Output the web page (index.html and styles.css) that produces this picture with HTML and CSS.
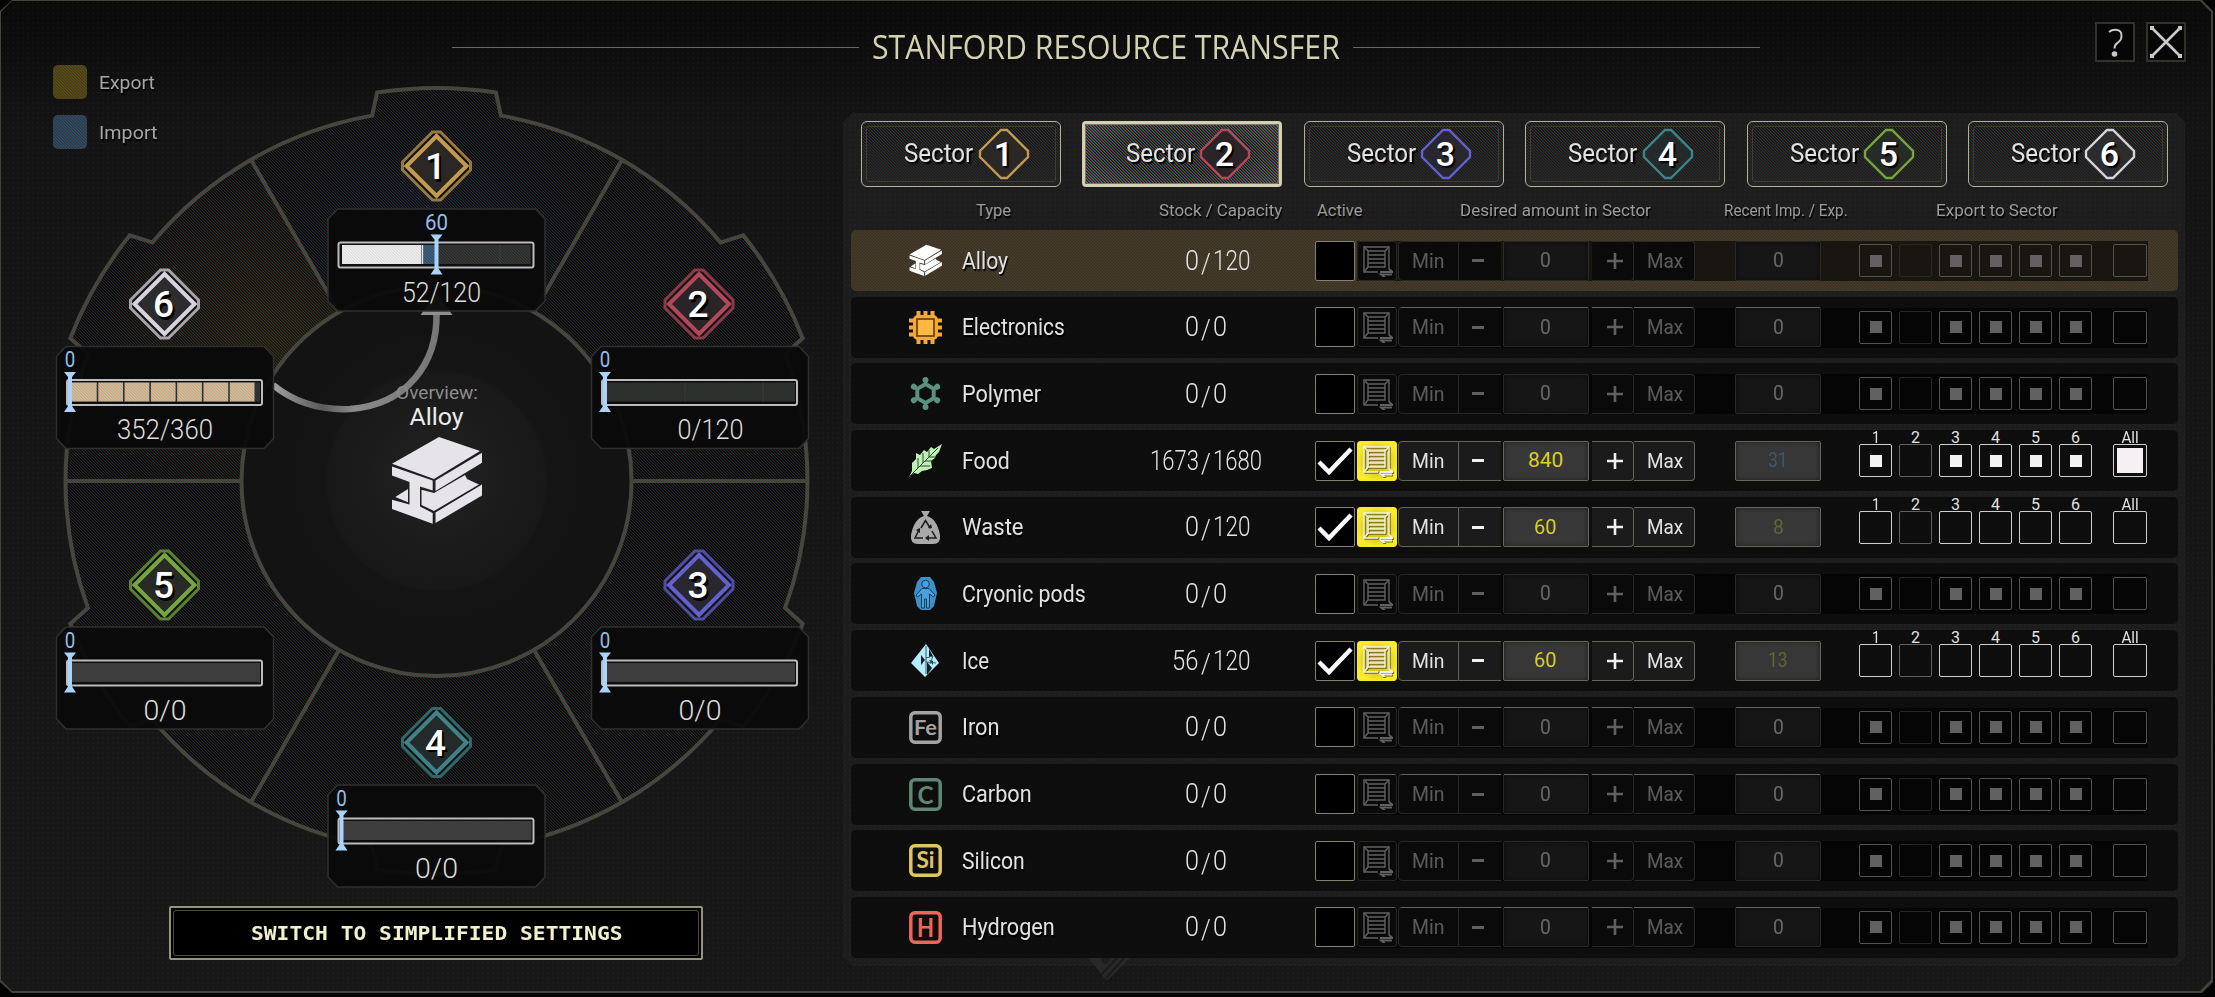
FILE: index.html
```html
<!DOCTYPE html>
<html lang="en">
<head>
<meta charset="utf-8">
<title>Stanford Resource Transfer</title>
<link rel="stylesheet" href="styles.css">
</head>
<body>
<main class="window">
  <div class="window-face"></div>
  <svg class="emblem" width="44" height="24" viewBox="0 0 44 24"><path d="M0 0h12l5 7 7-7h18L21 21q-2 2-4 0l-6-8z"/><path class="gap" d="M29 0 14 16M36 0 18 20"/></svg>
  <header class="titlebar">
    <i class="rule rule-left"></i>
    <h1><span class="fit" data-w="468">STANFORD RESOURCE TRANSFER</span></h1>
    <i class="rule"></i>
    <div class="tools">
      <button class="tool"><svg width="40" height="40" viewBox="0 0 40 40"><path class="thin" d="M14 10q3-2.500 7-2.200 6 .5 5.500 6.500 0 4-4 6.500-3 2-3 5.700"/><circle cx="19.500" cy="32" r="2.800"/></svg></button>
      <button class="tool"><svg width="40" height="40" viewBox="0 0 40 40"><path d="M5 5 35 35M35 5 5 35"/><path class="ends" d="M4 4h4v4h-4zM32 4h4v4h-4zM4 32h4v4h-4zM32 32h4v4h-4z"/></svg></button>
    </div>
  </header>
  <section class="content">
    <div class="overview">
      <ul class="legend">
        <li><i class="swatch export"></i><span class="fit" data-w="56">Export</span></li>
        <li><i class="swatch import"></i><span class="fit" data-w="58">Import</span></li>
      </ul>
      <svg class="wheel" id="wheel" width="840" height="900" viewBox="0 0 840 900"></svg>
      <button class="switch"><span class="fit" data-w="371">SWITCH TO SIMPLIFIED SETTINGS</span></button>
    </div>
    <div class="panel">
      <nav class="tabs" id="tabs"></nav>
      <div class="heads">
        <span class="fit" data-w="35">Type</span>
        <span class="fit" data-w="123">Stock / Capacity</span>
        <span class="fit" data-w="45">Active</span>
        <span class="fit" data-w="191">Desired amount in Sector</span>
        <span class="fit" data-w="124">Recent Imp. / Exp.</span>
        <span class="fit" data-w="122">Export to Sector</span>
      </div>
      <div class="rows" id="rows"></div>
    </div>
  </section>
</main>
<script src="script.js"></script>
</body>
</html>
```
FILE: styles.css
```css
:root { --hatch: url("data:image/svg+xml,%3Csvg xmlns='http://www.w3.org/2000/svg' width='3' height='3' shape-rendering='crispEdges' fill-opacity='.28'%3E%3Cpath fill='%23f00' d='M0 0h1v1H0zM1 1h1v1H1zM2 2h1v1H2z'/%3E%3Cpath fill='%230f0' d='M1 0h1v1H1zM2 1h1v1H2zM0 2h1v1H0z'/%3E%3Cpath fill='%2300f' d='M2 0h1v1H2zM0 1h1v1H0zM1 2h1v1H1z'/%3E%3C/svg%3E"); }
* { box-sizing: border-box; }
body { margin: 0; background: #030303; font-family: Roboto, "Liberation Sans", sans-serif; color: #e2e2e2; }
h1, ul { margin: 0; padding: 0; }
button { padding: 0; margin: 0; border: 0; background: none; color: inherit; font: inherit; }
i { display: block; }
.fit { display: inline-block; white-space: nowrap; line-height: 1; text-align: left; }
.fit b { display: inline-block; font-weight: inherit; transform-origin: 0 50%; }

.window { position: relative; width: 2213px; height: 993px; background: #45443b;
  clip-path: polygon(12px 0, 2202px 0, 2213px 11px, 2213px 982px, 2202px 993px, 12px 993px, 0 982px, 0 11px); }
.window-face { position: absolute; inset: 1px 2px 2px 1px;
  clip-path: polygon(11px 0, calc(100% - 11px) 0, 100% 11px, 100% calc(100% - 11px), calc(100% - 11px) 100%, 11px 100%, 0 calc(100% - 11px), 0 11px);
  background: radial-gradient(circle at 2px 2px, rgba(255,255,255,.02) 1px, transparent 1.300px) 0 0 / 5px 5px,
    linear-gradient(#0a0a0a, #0c0c0c 30px, #141414 130px, #161616 60%, #171717); }
.emblem { position: absolute; left: 1088px; top: 958px; fill: #282828; z-index: 1; }
.emblem .gap { stroke: #1b1b1b; stroke-width: 2; }

.titlebar { position: relative; height: 113px; display: flex; align-items: flex-start; padding: 22px 27px 0 452px; }
.rule { width: 407px; height: 1px; background: #69685a; margin-top: 25px; }
h1 { font: 400 32px "Open Sans", "Noto Sans", sans-serif; color: #d5d2b4; margin: 9px 14px 0 13px; width: 467px; display: flex; }
.tools { margin-left: auto; display: flex; gap: 11px; }
.tool { width: 40px; height: 40px; background: #060606; outline: 2px solid #33322a; outline-offset: -2px; display: block; }
.tool svg { display: block; fill: #c9c9c9; stroke: none; }
.tool path { stroke: #c9c9c9; stroke-width: 2.600; fill: none; }
.tool path.thin { stroke-width: 2; }
.tool path.ends { fill: #c9c9c9; stroke: none; }

.content { position: relative; display: flex; height: 853px; }
.overview { width: 843px; position: relative; flex: none; }
.legend { position: absolute; left: 53px; top: -48px; list-style: none; display: grid; gap: 16px; font-size: 19px; color: #a6a6a6; z-index: 2; }
.legend li { display: flex; align-items: center; gap: 11.500px; height: 34px; text-shadow: 1px 2px 1px #000; }
.swatch { width: 34px; height: 34px; border-radius: 5px; }
.export { background: linear-gradient(rgba(76,62,16,.4), rgba(76,62,16,.4)), var(--hatch), #51430a; }
.import { background: linear-gradient(rgba(42,62,82,.4), rgba(42,62,82,.4)), var(--hatch), #264056; }
.wheel { position: absolute; left: 0; top: -113px; }
.switch { position: absolute; left: 169px; top: 793px; width: 534px; height: 54px; background: #000; border: 2px solid #96937a;
  display: grid; place-items: center; padding-top: 2px; font: 700 19.500px "DejaVu Sans Mono", monospace; color: #f3f0cb; border-radius: 2px; }
.switch::before { content: ""; position: absolute; inset: 2px; border: 1px solid #4e4c3e; border-radius: 3px; }

.panel { width: 1342px; height: 853px; padding: 8px 7px 0 8px;
  background: radial-gradient(circle at 2px 2px, rgba(255,255,255,.02) 1px, transparent 1.300px) 0 0 / 5px 5px, #1d1d1d;
  clip-path: polygon(9px 0, calc(100% - 9px) 0, 100% 9px, 100% calc(100% - 9px), calc(100% - 9px) 100%, 9px 100%, 0 calc(100% - 9px), 0 9px); }
.tabs { display: flex; justify-content: space-between; padding: 0 10px; }
.tab { position: relative; width: 200px; height: 66px; border: 1.500px solid #b5b298; border-radius: 6px; display: flex; align-items: center; padding-left: 42px; gap: 4px;
  font-size: 26px; text-shadow: 2px 2px 1px #000;
  background: linear-gradient(rgba(20,20,20,0) 20%, rgba(36,36,36,.8)), var(--hatch), #0e0e0e; }
.tab .fit { margin-top: -2px; }
.tab::before { content: ""; position: absolute; inset: 4px; border: 1px solid #3e3d34; border-radius: 3px; }
.tab.on { border: 3px solid #d3d0b3; border-radius: 4px; padding-left: 40.500px;
  background: var(--hatch), var(--hatch), radial-gradient(ellipse, #141414 50%, #3c3c3a); }
.tab.on::before { inset: 0; border-color: #7a7968; }
.tab svg { position: relative; display: block; flex: none; }
.heads { display: grid; grid-template-columns: 183px 158px 143px 263.500px 212.500px 1fr; padding: 5px 0 0 125px; height: 43px; align-items: center; font-size: 16.500px; color: #9b9b9b; text-shadow: 1px 2px 1px #000; }

.rows { display: grid; gap: 5.700px; }
.row { position: relative; height: 61px; border-radius: 5px; display: grid; align-items: center;
  grid-template-columns: 33px 19.500px 189px 164.500px 40px 2px 40px 1px 299px 38px 86px 38px auto; padding-left: 58px;
  background: linear-gradient(rgba(11,11,11,.88), rgba(11,11,11,.88)), var(--hatch), #0c0c0c; }
.row.picked { background: linear-gradient(rgba(62,52,34,.6), rgba(62,52,34,.6)), var(--hatch), #3a3220; }
.row svg { display: block; }
.name { grid-column: 3; font-size: 23.500px; text-shadow: 1px 2px 1px #000; }
.stock { display: flex; font-size: 27px; font-weight: 300; padding-top: 6px; }
.stock .used { width: 48px; display: flex; justify-content: flex-end; margin-right: 2px; }
.stock .slash { width: 12px; }
.check { grid-column: 5; width: 40px; height: 40px; background: #000; border: 1.500px solid #84826d; border-radius: 2px; }
.check svg { margin: -1px; }
.crate { grid-column: 7; width: 40px; height: 40px; border-radius: 3px; border: 1px solid #605f54; background: #1b1b1b; display: grid; place-items: center; }
.active .crate { background: radial-gradient(#d9c823 40%, #f9ea2b 75%); border-color: #f9ea2b; }
.crate svg { filter: drop-shadow(1px 1px 0 rgba(0,0,0,.5)); }
.stepper { grid-column: 9; display: flex; font-size: 20px; }
.cell { height: 40px; border: 1.500px solid #67655a; background: #1b1b1b; display: grid; place-items: center; }
.min { width: 61px; border-radius: 4px 0 0 4px; padding-right: 2px; }
.minus { width: 42px; border-right: 0; border-left: 0; padding-right: 4px; }
.value { width: 86px; margin: 0 3px 0 1.500px; background: #373737; box-shadow: inset 0 0 4px #1c1c1c; font-size: 21px; border-radius: 2px; color: #d9cf28; }
.plus { width: 42px; border-left: 0; border-radius: 0 4px 4px 0; padding-left: 5px; }
.max { width: 61px; border-left: 0; border-radius: 0 4px 4px 0; padding-left: 2px; }
.recent { grid-column: 11; margin: 0; color: #686335; }
.recent.in { color: #40566b; }
.idle .value { color: #fff; }
.targets { grid-column: 13; display: flex; gap: 7px; }
.box { position: relative; width: 33px; height: 33px; border: 1.500px solid #cfcfcf; border-radius: 2px; display: grid; place-items: center; }
.box.own { border-color: #626262; }
.box i { width: 12px; height: 12px; background: #f4f0f4; }
.box.all { margin-left: 14px; width: 34px; }
.box.all i { width: 26px; height: 25px; }
.tag { position: absolute; left: 50%; top: -15px; transform: translateX(-50%); font-size: 16px; line-height: 1; display: flex; }
.shade { position: absolute; left: 506px; right: 30px; top: 11px; height: 40px; background: rgba(0,0,0,.6); }
```
FILE: script.js
```js
const HUES = { 1: '#c39a4e', 2: '#b3475c', 3: '#6560cf', 4: '#3f8288', 5: '#76a63f', 6: '#d8d3dc' };
const FILLS = { 1: '#2a2724', 2: '#2b2426', 3: '#28272f', 4: '#242a2a', 5: '#272a25', 6: '#2c2c2e' };
const fit = (text, w) => `<span class="fit" data-w="${w}">${text}</span>`;

/* ---------- wheel ---------- */
const CX = 436.500, CY = 481;
const pt = (r, deg) => {
  const a = deg * Math.PI / 180;
  return `${(CX + r * Math.sin(a)).toFixed(1)} ${(CY - r * Math.cos(a)).toFixed(1)}`;
};
const label = (x, y, w, size, fill, text, extra = '') =>
  `<text x="${x - w / 2}" y="${y}" font-size="${size}" fill="${fill}" textLength="${w}" lengthAdjust="spacingAndGlyphs" ${extra}>${text}</text>`;

function rim() {
  let d = `M${pt(371, -50)}`;
  for (let i = 0; i < 6; i++) {
    const c = i * 60;
    d += `A371 371 0 0 1 ${pt(371, c - 10)}L${pt(393, c - 8.7)}A393 393 0 0 1 ${pt(393, c + 8.7)}L${pt(371, c + 10)}`;
  }
  return d + `A371 371 0 0 1 ${pt(371, -50)}Z`;
}
const wedge = c => `M${pt(195, c - 30)}L${pt(371, c - 30)}A371 371 0 0 1 ${pt(371, c + 30)}L${pt(195, c + 30)}A195 195 0 0 0 ${pt(195, c - 30)}Z`;

function badge(n, x, y) {
  return `<g transform="translate(${x} ${y})" fill="none" stroke="${HUES[n]}">
    <path d="M-4-34h8L34-4v8L4 34h-8L-34 4v-8Z" fill="#151515" stroke-width="3" stroke-opacity=".75"/>
    <path d="M0-30 30 0 0 30-30 0Z" fill="${FILLS[n]}" stroke-width="4"/></g>
    <text x="${x - 1}" y="${y + 13.500}" text-anchor="middle" font-size="37" font-weight="500" fill="#000" transform="translate(2 2)">${n}</text>
    <text x="${x - 1}" y="${y + 13}" text-anchor="middle" font-size="37" font-weight="500" fill="#fff">${n}</text>`;
}

function card(o) {
  const { x, y } = o;
  let bar;
  if (o.kind === 'partial') {
    bar = `<rect x="${x + 14.500}" y="${y + 36.500}" width="79" height="19" fill="#fff"/><rect x="${x + 94}" y="${y + 36.500}" width="2" height="19" fill="#fff"/>
      <rect x="${x + 96}" y="${y + 36.500}" width="12" height="19" fill="#33587d"/><rect x="${x + 108}" y="${y + 36.500}" width="95" height="19" fill="#292c2a"/>
      <rect x="${x + 172}" y="${y + 36.500}" width="1" height="19" fill="#3b3e3c"/>`;
  } else if (o.kind === 'full') {
    bar = `<rect x="${x + 15}" y="${y + 36.500}" width="189" height="19" fill="#292c2a"/>`;
    for (let i = 0; i < 7; i++) bar += `<rect x="${x + 16 + i * 26.300}" y="${y + 36.500}" width="24.700" height="19" fill="#e0c59c"/>`;
  } else if (o.kind === 'empty') {
    bar = `<rect x="${x + 15}" y="${y + 36.500}" width="189" height="19" fill="#292c2a"/><path d="M${x + 94} ${y + 36.500}v19M${x + 172} ${y + 36.500}v19" stroke="#363937"/>`;
  } else bar = `<rect x="${x + 15}" y="${y + 36.500}" width="189" height="19" fill="#3b3b3b"/>`;
  const m = x + o.mark;
  return `<path d="M${x + 10} ${y + .5}h198l9.500 10v82l-9.500 10h-198l-9.500-10v-82Z" fill="rgba(10,10,10,.94)" stroke="#2f2f2f" stroke-width="1.500"/>
    <rect x="${x + 11}" y="${y + 34}" width="195" height="25" rx="2" fill="#0c0c0c" stroke="#bdbbc0" stroke-width="2"/>${bar}
    <rect x="${x + 14}" y="${y + 36}" width="190" height="20" fill="url(#hatch)" opacity="${o.kind === 'partial' || o.kind === 'full' ? .6 : .3}"/>
    <path d="M${m - 6} ${y + 26}h12l-4 5v29l4 6h-12l4-6v-29Z" fill="#a9d3fb"/>
    ${label(m, y + 21, o.goal === '0' ? 10.500 : 23, 21.500, '#93bdea', o.goal)}
    ${label(x + o.cx, y + 93, o.w + 2, 27, '#dcdcdc', o.text, 'font-weight="300"')}`;
}

const beam = fill => `<path d="M0 26.700 47 0 88 14 42 42ZM0 29.500 40.700 43.500V53.500L28 49.500V69.500L40.700 76V86.700L0 72V62.700L17.500 67.500V45L0 38.500ZM43.500 43.500 90 15.700V25.700L43.500 54ZM29.500 52.700 42 56 73 38 75 42 87 47.500 42 74 29.500 68ZM43.500 75.500 90 47.500V58.500L43.500 86ZM3.300 60 16 52V65.300Z" fill="${fill}"/>`;

document.getElementById('wheel').innerHTML = `
  <defs>
    <pattern id="hatch" width="3" height="3" patternUnits="userSpaceOnUse" shape-rendering="crispEdges">
      ${[0, 1, 2].map(y => ['#f00', '#0f0', '#00f'].map((c, k) => `<rect x="${(k + y) % 3}" y="${y}" width="1" height="1" fill="${c}" opacity=".25"/>`).join('')).join('')}
    </pattern>
    <radialGradient id="glow"><stop offset="0" stop-color="#202020"/><stop offset=".4" stop-color="#1e1e1e" stop-opacity=".7"/><stop offset="1" stop-color="#1c1c1c" stop-opacity="0"/></radialGradient>
    <linearGradient id="flow"><stop offset="0" stop-color="#a0a0a0"/><stop offset=".3" stop-color="#5a5a5a"/><stop offset=".5" stop-color="#8a8a8a"/><stop offset="1" stop-color="#777"/></linearGradient>
    <radialGradient id="blue" gradientUnits="userSpaceOnUse" cx="436" cy="260" r="170"><stop offset="0" stop-color="#060a1a"/><stop offset="1" stop-color="#060a1a" stop-opacity="0"/></radialGradient>
    <radialGradient id="gold" gradientUnits="userSpaceOnUse" cx="270" cy="340" r="190"><stop offset="0" stop-color="#181402"/><stop offset="1" stop-color="#181402" stop-opacity="0"/></radialGradient>
  </defs>
  <path d="${rim()}" fill="#000"/>
  <path d="${wedge(0)}" fill="url(#blue)"/><path d="${wedge(-60)}" fill="url(#gold)"/>
  <path d="${rim()}" fill="url(#hatch)" stroke="#47463e" stroke-width="4"/>
  <circle cx="${CX}" cy="${CY}" r="195" fill="#131313" stroke="#47463e" stroke-width="4"/>
  <path d="${[30, 90, 150, 210, 270, 330].map(a => `M${pt(195, a)}L${pt(371, a)}`).join('')}" stroke="#47463e" stroke-width="4"/>
  <circle cx="${CX}" cy="${CY - 5}" r="140" fill="url(#glow)"/><circle cx="${CX}" cy="${CY}" r="110" fill="url(#hatch)" opacity=".15"/>
  <path d="M273 385Q305 411 350 409C405 405 438 365 436.500 312" fill="none" stroke="url(#flow)" stroke-width="6.500"/>
  <path d="M420.500 315h32l-16-22Z" fill="#8f8f8f"/>
  ${badge(1, 436.500, 166)}${badge(2, 699, 304)}${badge(3, 699, 585)}${badge(4, 436.500, 742.500)}${badge(5, 164.500, 585)}${badge(6, 164.500, 304)}
  ${card({ x: 327.500, y: 208.500, kind: 'partial', mark: 109, goal: '60', text: '52/120', w: 77, cx: 114 })}
  ${card({ x: 591, y: 346, kind: 'empty', mark: 14, goal: '0', text: '0/120', w: 64, cx: 119.500 })}
  ${card({ x: 56, y: 346, kind: 'full', mark: 14, goal: '0', text: '352/360', w: 94, cx: 109 })}
  ${card({ x: 591, y: 626.500, kind: 'none', mark: 14, goal: '0', text: '0/0', w: 41, cx: 109 })}
  ${card({ x: 56, y: 626.500, kind: 'none', mark: 14, goal: '0', text: '0/0', w: 41, cx: 109 })}
  ${card({ x: 327.500, y: 784.500, kind: 'none', mark: 14, goal: '0', text: '0/0', w: 41, cx: 109 })}
  ${label(437, 399, 82, 19, '#8c8c8c', 'Overview:')}
  ${label(436.500, 425, 54, 24, '#ececec', 'Alloy')}
  <g transform="translate(392 437)">${beam('#e6e4e8')}</g>`;

/* ---------- tabs ---------- */
document.getElementById('tabs').innerHTML = [1, 2, 3, 4, 5, 6].map(n => `
  <button class="tab${n === 2 ? ' on' : ''}">${fit('Sector', 69.500)}
    <svg width="52" height="52" viewBox="-26 -26 52 52"><path d="M-3-24h6L24-3v6L3 24h-6L-24 3v-6Z" fill="${FILLS[n]}" stroke="${HUES[n]}" stroke-width="2.400"/>
    <text x="-.5" y="11.500" text-anchor="middle" font-size="34" font-weight="500" fill="#fff">${n}</text></svg></button>`).join('');

/* ---------- rows ---------- */
const el = (c, t, w, s = 19) => `<rect x="1.800" y="1.800" width="29.400" height="29.400" rx="4" fill="none" stroke="${c}" stroke-width="3.500"/>
  <text x="${16.500 - w / 2}" y="${16.500 + s * .36}" font-family="Lato" font-weight="700" font-size="${s}" fill="${c}" textLength="${w}" lengthAdjust="spacingAndGlyphs">${t}</text>`;
const ICONS = {
  Alloy: `<g transform="translate(.5 .8) scale(.36)">${beam('#fff')}</g>`,
  Electronics: `<g fill="#f4a83a"><rect x="4" y="4" width="25" height="25" rx="5"/><path d="M7.500 0h4v33h-4zM14.500 0h4v33h-4zM21.500 0h4v33h-4zM0 7.500v4h33v-4zM0 14.500v4h33v-4zM0 21.500v4h33v-4z"/></g><rect x="8" y="8" width="17" height="17" fill="#ffb743" stroke="#5c3c0c" stroke-width="1.600"/>`,
  Polymer: `<g fill="none" stroke="#5c9080" stroke-width="4"><path d="M16.500 7 24.700 11.800V21.200L16.500 26 8.300 21.200V11.800Z"/></g><g fill="#5c9080">${[0, 60, 120, 180, 240, 300].map(a => `<circle cx="16.500" cy="3" r="3" transform="rotate(${a} 16.500 16.500)"/><path d="M15 3h3v6h-3z" transform="rotate(${a} 16.500 16.500)"/>`).join('')}</g>`,
  Food: `<path d="M0 33 3 27 3 19 7 15 7 9 11 11 15 6 18 8 22 3 25 5 33 0 30 8 27 11 26 14 22 17 23 24 18 26 13 27 9 30 5 29Z" fill="#bff0b8"/><path d="M1 32 29 4M9 24V14M11 22H21M14 19V9M16 17H24M20 13V6M20 13h7" stroke="#2c4a28" stroke-width="1" fill="none"/>`,
  Waste: `<path d="M12 0h9l-3 5q10 3 13 19 1 9-7 9H9q-8 0-7-9Q5 8 15 5Z" fill="#a9a9a9"/><path d="M12 17l4.500-7.500 5 8M23 20l4 7h-8M14 27H6l4-8" fill="none" stroke="#1c1c1c" stroke-width="1.500"/><path d="M19 17h4l-1-4zM20 24v6l-4-3zM7 19l4-2v5z" fill="#1c1c1c"/>`,
  Pods: `<path d="M12 0h9l4 5 3 11-3 13-4 4h-9l-4-4L5 16 8 5Z" fill="#3f8fc9"/><g fill="#4ba0dc" stroke="#173f5e" stroke-width="1"><path d="M13 11.500h7l6 6.500-1.500 2L20.500 17v14h-3V22h-2v9h-3V17l-4 3L7 18Z"/><circle cx="16.500" cy="7" r="3.800"/></g>`,
  Ice: `<path d="M17 0 30 19 16 33 2 19Z" fill="#b4ebff"/><path d="M12 11v10l4-5zM20 5v8l4-1zM18 18v13l5-7zM20 16l4 1v4z" fill="#10202a"/><path d="M17 2v28M17 14l7-2M24 12l-3 8M17 18l10 1" stroke="#3c5560" fill="none"/>`,
  Iron: el('#a3a3a3', 'Fe', 23, 21), Carbon: el('#5f8673', 'C', 16, 25), Silicon: el('#e0c566', 'Si', 18, 22), Hydrogen: el('#f0655a', 'H', 17, 27)
};
const CRATE = `<svg width="32" height="32" viewBox="0 0 32 32" fill="none" stroke="#f2f2f2" stroke-width="1.400">
  <path d="M17 27H3V2H28V24"/><path d="M7 6H24V22H7ZM3 2 7 6M28 2 24 6M3 27 7 22M7 10H24M7 14H24M7 18H24"/>
  <path d="M19 27H32L28 24M31 29.500H20L24 32.500" stroke-width="1.800"/></svg>`;
const TICK = `<svg width="40" height="40" viewBox="0 0 40 40"><path d="M4 21 14 31 36 8" fill="none" stroke="#fff" stroke-width="4.500"/></svg>`;

const NUM_W = { 1: 14, 2: 26.500, 3: 37.500, 4: 49 };
const DATA = [
  ['Alloy', 46, '0', '120'], ['Electronics', 103, '0', '0'], ['Polymer', 79, '0', '0'],
  ['Food', 48, '1673', '1680', '840', '31', true], ['Waste', 62, '0', '120', '60', '8'],
  ['Cryonic pods', 124, '0', '0'], ['Ice', 27, '56', '120', '60', '13'],
  ['Iron', 38, '0', '0'], ['Carbon', 70, '0', '0'], ['Silicon', 63, '0', '0'], ['Hydrogen', 93, '0', '0']
];
document.getElementById('rows').innerHTML = DATA.map(([name, w, used, cap, goal, recent, sends], i) => {
  const active = !!goal;
  const filled = !active || sends;
  const boxes = [1, 2, 3, 4, 5, 6].map(n => `<span class="box${n === 2 ? ' own' : ''}">${active ? `<span class="tag">${fit(n, n === 1 ? 8 : 9)}</span>` : ''}${filled && n !== 2 ? '<i></i>' : ''}</span>`).join('');
  const g = goal || '0', r = recent || '0', dw = s => [0, 11, 23, 35][s.length];
  return `<div class="row ${active ? 'active' : 'idle'}${i === 0 ? ' picked' : ''}">
    <svg width="33" height="33" viewBox="0 0 33 33">${ICONS[name] || ICONS.Pods}</svg>
    <span class="name">${fit(name, w)}</span>
    <span class="stock"><span class="used">${fit(used, NUM_W[used.length])}</span><span class="slash">${fit('/', 10)}</span>${fit(cap, NUM_W[cap.length])}</span>
    <span class="check">${active ? TICK : ''}</span>
    <span class="crate">${CRATE}</span>
    <span class="stepper">
      <span class="cell min">${fit('Min', 32)}</span><span class="cell minus"><svg width="12" height="3"><path d="M0 0h12v3H0z" fill="#f0f0f0"/></svg></span>
      <span class="cell value">${fit(g, dw(g))}</span>
      <span class="cell plus"><svg width="16" height="16"><path d="M6.700 0h2.600v16H6.700zM0 6.700h16v2.600H0z" fill="#f0f0f0"/></svg></span><span class="cell max">${fit('Max', 36)}</span>
    </span>
    <span class="cell value recent${r === '31' ? ' in' : ''}">${fit(r, r.length === 2 ? 20 : 11)}</span>
    <span class="targets">${boxes}<span class="box all">${active ? `<span class="tag">${fit('All', 17)}</span>` : ''}${sends ? '<i></i>' : ''}</span></span>
    ${active ? '' : '<i class="shade"></i>'}
  </div>`;
}).join('');

document.querySelectorAll('.fit').forEach(s => {
  const b = document.createElement('b');
  b.textContent = s.textContent;
  s.replaceChildren(b);
  const w = +s.dataset.w;
  b.style.transform = `scaleX(${(w / b.offsetWidth).toFixed(4)})`;
  s.style.width = w + 'px';
});
```
